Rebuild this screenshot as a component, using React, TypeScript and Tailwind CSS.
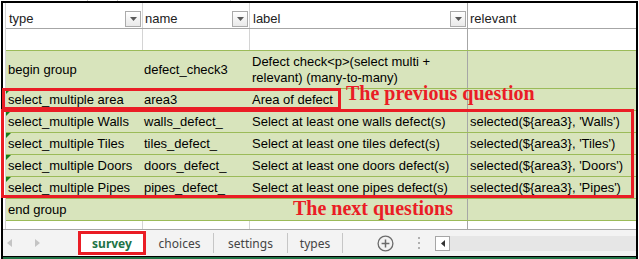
import React from "react";

type Row = { c: [string, string, string, string]; flag?: boolean };

const ROWS: Row[] = [
  { c: ["select_multiple area", "area3", "Area of defect", ""], flag: true },
  { c: ["select_multiple Walls", "walls_defect_", "Select at least one walls defect(s)", "selected(${area3}, 'Walls')"], flag: true },
  { c: ["select_multiple Tiles", "tiles_defect_", "Select at least one tiles defect(s)", "selected(${area3}, 'Tiles')"], flag: true },
  { c: ["select_multiple Doors", "doors_defect_", "Select at least one doors defect(s)", "selected(${area3}, 'Doors')"], flag: true },
  { c: ["select_multiple Pipes", "pipes_defect_", "Select at least one pipes defect(s)", "selected(${area3}, 'Pipes')"], flag: true },
  { c: ["end group", "", "", ""] },
];

function DropBtn() {
  return (
    <div className="w-[16px] h-[16px] border border-[#ababab] bg-gradient-to-b from-white to-[#e9e9e9] flex items-center justify-center mr-[1px]">
      <svg width="7" height="4" viewBox="0 0 7 4">
        <path d="M0 0 H7 L3.5 4 Z" fill="#5a5a5a" />
      </svg>
    </div>
  );
}

function GreenRow({ row }: { row: Row }) {
  return (
    <div className="grid grid-cols-[137px_107px_218px_1fr] h-[22px] border-b border-[#9bbb59] bg-[#d8e4bc]">
      <div className="relative flex items-center pl-[2px] whitespace-nowrap">
        {row.flag && (
          <span className="absolute left-0 top-0 w-0 h-0 border-t-[5px] border-t-[#1a7d1a] border-r-[5px] border-r-transparent" />
        )}
        {row.c[0]}
      </div>
      <div className="flex items-center pl-[1px] whitespace-nowrap">{row.c[1]}</div>
      <div className="flex items-center pl-[2px] whitespace-nowrap border-r border-[#a6a6a6]">{row.c[2]}</div>
      <div className="flex items-center pl-[2px] whitespace-nowrap">{row.c[3]}</div>
    </div>
  );
}

function WhiteCells({ h }: { h: string }) {
  return (
    <div className={`grid grid-cols-[137px_107px_218px_1fr] ${h}`}>
      <div className="border-r border-[#d4d4d4]" />
      <div className="border-r border-[#d4d4d4]" />
      <div className="border-r border-[#a6a6a6]" />
      <div />
    </div>
  );
}

function Sep() {
  return <div className="w-px h-[20px] bg-[#c6c6c6]" />;
}

export default function App() {
  return (
    <div className="relative w-[639px] h-[259px] bg-white overflow-hidden text-[13px] leading-[15px] text-black font-['Liberation_Sans',Arial,sans-serif]">
      {/* remnant of row above */}
      <div className="h-px flex">
        <div className="w-[87px]" />
        <div className="w-px bg-[#c8c8c8]" />
        <div className="w-[29px]" />
        <div className="w-px bg-[#c8c8c8]" />
        <div className="w-[112px]" />
        <div className="w-px bg-[#c8c8c8]" />
      </div>

      <div className="ml-px w-[637px] h-[258px] border-x-2 border-t-2 border-black flex flex-col">
        {/* sheet grid */}
        <div className="pl-[2px]">
          <div className="border-l border-[#d4d4d4]">
            {/* header */}
            <div className="grid grid-cols-[137px_107px_218px_1fr] h-[26px] border-b border-[#a6a6a6] text-[#222]">
              <div className="flex items-end justify-between pl-[3px] pb-[1px] border-r border-[#d4d4d4]">
                <span className="pb-[1px]">type</span>
                <DropBtn />
              </div>
              <div className="flex items-end justify-between pl-[2px] pb-[1px] border-r border-[#d4d4d4]">
                <span className="pb-[1px]">name</span>
                <DropBtn />
              </div>
              <div className="flex items-end justify-between pl-[3px] pb-[1px] border-r border-[#a6a6a6]">
                <span className="pb-[1px]">label</span>
                <DropBtn />
              </div>
              <div className="flex items-end pl-[2px] pb-[1px]">
                <span className="pb-[1px]">relevant</span>
              </div>
            </div>

            {/* empty row */}
            <WhiteCells h="h-[21px]" />

            {/* green block */}
            <div className="border-t border-[#9bbb59]">
              <div className="grid grid-cols-[137px_107px_218px_1fr] h-[38px] border-b border-[#9bbb59] bg-[#d8e4bc]">
                <div className="flex items-center pl-[2px] whitespace-nowrap">begin group</div>
                <div className="flex items-center pl-[1px] whitespace-nowrap">defect_check3</div>
                <div className="flex items-center pl-[2px] leading-[16px] border-r border-[#a6a6a6]">
                  <span>
                    Defect check&lt;p&gt;(select multi +
                    <br />
                    relevant) (many-to-many)
                  </span>
                </div>
                <div />
              </div>
              {ROWS.map((r, i) => (
                <GreenRow key={i} row={r} />
              ))}
            </div>

            <WhiteCells h="h-[8px]" />
          </div>
        </div>

        {/* sheet tabs */}
        <div className="border-t border-[#a6a6a6] bg-[#f3f3f3] text-[12px] text-[#444] font-['Noto_Sans',sans-serif]">
          <div className="flex items-center h-[26px]">
            <div className="w-[75px] flex items-center">
              <svg className="ml-[4px]" width="5" height="8" viewBox="0 0 5 8">
                <path d="M5 0 V8 L0 4 Z" fill="#c4c4c4" />
              </svg>
              <svg className="ml-[23px]" width="5" height="8" viewBox="0 0 5 8">
                <path d="M0 0 V8 L5 4 Z" fill="#c4c4c4" />
              </svg>
            </div>
            <div className="w-[68px] h-full flex items-center justify-center bg-white font-bold text-[#217346]">survey</div>
            <div className="w-[67px] flex justify-center">choices</div>
            <Sep />
            <div className="w-[73px] flex justify-center">settings</div>
            <Sep />
            <div className="w-[54px] flex justify-center">types</div>
            <Sep />
            <svg className="ml-[34px]" width="17" height="17" viewBox="0 0 17 17">
              <circle cx="8.5" cy="8.5" r="7.4" fill="none" stroke="#6b6b6b" strokeWidth="1.3" />
              <path d="M8.5 4.6 V12.4 M4.6 8.5 H12.4" stroke="#6b6b6b" strokeWidth="1.5" />
            </svg>
            <div className="ml-[24px] flex flex-col gap-[3px]">
              <div className="w-[2px] h-[2px] bg-[#b0b0b0]" />
              <div className="w-[2px] h-[2px] bg-[#b0b0b0]" />
              <div className="w-[2px] h-[2px] bg-[#b0b0b0]" />
            </div>
            <div className="ml-[15px] flex-1 flex items-center">
              <div className="w-[15px] h-[15px] border border-[#a6a6a6] bg-white flex items-center justify-center">
                <svg width="4" height="7" viewBox="0 0 4 7">
                  <path d="M4 0 V7 L0 3.5 Z" fill="#333" />
                </svg>
              </div>
              <div className="flex-1 h-[15px] bg-[#e6e6e6]" />
            </div>
          </div>
          <div className="h-px bg-black" />
          <div className="h-[2px] bg-[#217346]" />
        </div>
      </div>

      {/* annotations */}
      <div className="absolute left-[2px] top-[88px] w-[339px] h-[22px] border-[3px] border-[#ea1d25]" />
      <div className="absolute left-[1px] top-[109px] w-[633px] h-[89px] border-[3px] border-[#ea1d25]" />
      <div className="absolute left-[78px] top-[231px] w-[68px] h-[24px] border-[3px] border-[#ea1d25]" />
      <div className="absolute left-[346px] top-[83px] text-[20px] leading-[20px] font-bold text-[#ea1d25] whitespace-nowrap font-['Liberation_Serif',serif]">
        The previous question
      </div>
      <div className="absolute left-[293px] top-[198px] text-[20px] leading-[20px] font-bold text-[#ea1d25] whitespace-nowrap font-['Liberation_Serif',serif]">
        The next questions
      </div>
    </div>
  );
}
